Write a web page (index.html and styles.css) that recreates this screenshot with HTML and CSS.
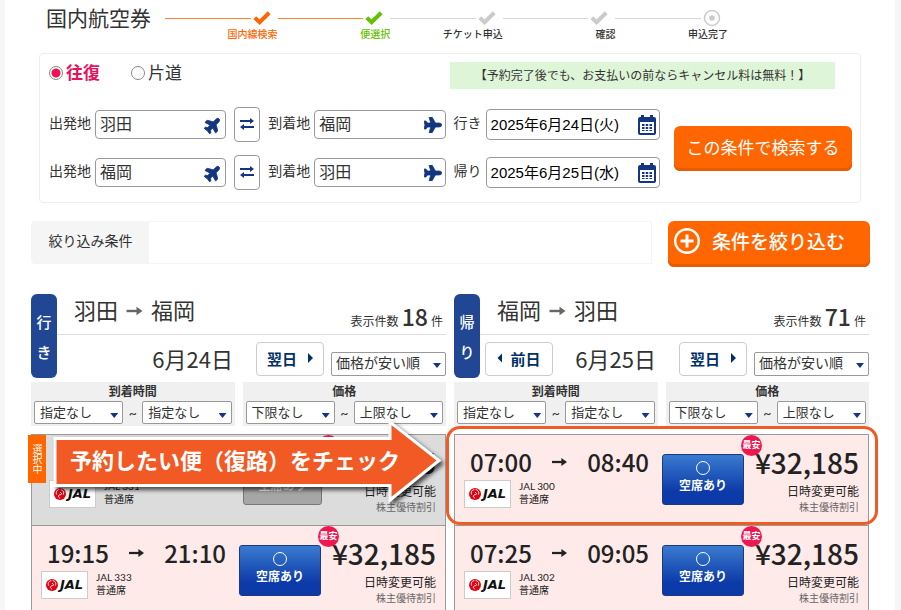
FILE: index.html
```html
<!DOCTYPE html>
<html lang="ja">
<head>
<meta charset="utf-8">
<title>国内航空券</title>
<link rel="stylesheet" href="styles.css">
</head>
<body>
<svg class="defs" aria-hidden="true">
  <symbol id="check" viewBox="0 0 18 14"><path d="M1.800 6.800 6.600 11.200 16.200 1.800" fill="none" stroke="currentColor" stroke-width="4"/></symbol>
  <symbol id="plane" viewBox="0 0 576 512"><path fill="currentColor" stroke="currentColor" stroke-width="24" d="M480 192H365.71L260.61 8.06A16.014 16.014 0 0 0 246.71 0h-65.5c-10.63 0-18.3 10.17-15.38 20.39L214.86 192H112l-43.2-57.6c-3.02-4.03-7.77-6.4-12.8-6.4H16.01C5.6 128-2.04 137.78.49 147.88L32 256 .49 364.12C-2.04 374.22 5.6 384 16.01 384H56c5.04 0 9.78-2.37 12.8-6.4L112 320h102.86l-49.03 171.6c-2.92 10.22 4.75 20.4 15.38 20.4h65.5c5.74 0 11.04-3.08 13.89-8.06L365.71 320H480c35.35 0 96-28.65 96-64s-60.65-64-96-64z"/></symbol>
  <symbol id="swap" viewBox="0 0 14 12"><path d="M0 3h11M3 9h11" stroke="currentColor" stroke-width="2"/><path d="M10 0 14 3l-4 3zM4 6 0 9l4 3z" fill="currentColor"/></symbol>
  <symbol id="calendar" viewBox="0 0 18 20"><path fill="currentColor" fill-rule="evenodd" d="M2 2h1V0h3V2h6V0h3V2h1q2 0 2 2v14q0 2-2 2H2q-2 0-2-2V4q0-2 2-2zM2 7v11h14V7z"/><path fill="currentColor" d="M4 9h2.500v2H4zM7.700 9h2.500v2H7.700zM11.500 9H14v2h-2.500zM4 12h2.500v2H4zM7.700 12h2.500v2H7.700zM11.500 12H14v2h-2.500zM4 15h2.500v1H4zM7.700 15h2.500v1H7.700zM11.500 15H14v1h-2.500z"/></symbol>
  <symbol id="arrow" viewBox="0 0 16 10"><path d="M0 5h11" stroke="currentColor" stroke-width="2.400"/><path d="M10 .8l6 4.200-6 4.200z" fill="currentColor"/></symbol>
  <symbol id="crane" viewBox="0 0 12 12"><circle cx="6" cy="6" r="6" fill="#e60012"/><path d="M2.600 6.500C1.500 3.500 3.500 1.800 5.300 1.600M9.400 6.500C10.500 3.500 8.500 1.800 6.700 1.600M6 10C3.300 9 4.300 6.800 6.200 6.700S8 4.800 6 4.300" fill="none" stroke="#fff" stroke-width="1"/></symbol>
</svg>
<main class="page">
  <header class="top">
    <h1>国内航空券</h1>
    <ol class="steps">
      <li class="step done"><span class="track"><svg class="tick"><use href="#check"/></svg></span><span class="step-name">国内線検索</span></li>
      <li class="step current"><span class="track"><svg class="tick"><use href="#check"/></svg></span><span class="step-name">便選択</span></li>
      <li class="step"><span class="track"><svg class="tick"><use href="#check"/></svg></span><span class="step-name">チケット申込</span></li>
      <li class="step"><span class="track"><svg class="tick"><use href="#check"/></svg></span><span class="step-name">確認</span></li>
      <li class="step"><span class="track"><svg class="tick" viewBox="0 0 18 18"><circle cx="9" cy="9" r="7.500" fill="none" stroke="currentColor" stroke-width="1.500"/><circle cx="9" cy="9" r="2.800" fill="currentColor"/></svg></span><span class="step-name">申込完了</span></li>
    </ol>
  </header>

  <form class="search">
    <div class="search-top">
      <label class="trip"><input type="radio" name="trip" checked><span>往復</span></label>
      <label class="trip"><input type="radio" name="trip"><span>片道</span></label>
      <p class="notice">【予約完了後でも、お支払いの前ならキャンセル料は無料！】</p>
    </div>
    <div class="search-body">
      <div class="legs">
        <div class="leg">
          <label for="from1">出発地</label>
          <span class="field"><input id="from1" type="text" value="羽田"><svg class="plane takeoff"><use href="#plane"/></svg></span>
          <button type="button" class="swap" aria-label="入れ替え"><svg><use href="#swap"/></svg></button>
          <label for="to1">到着地</label>
          <span class="field"><input id="to1" type="text" value="福岡"><svg class="plane"><use href="#plane"/></svg></span>
          <label for="date1" class="date-label">行き</label>
          <span class="field date"><input id="date1" type="text" value="2025年6月24日(火)"><svg class="calendar"><use href="#calendar"/></svg></span>
        </div>
        <div class="leg">
          <label for="from2">出発地</label>
          <span class="field"><input id="from2" type="text" value="福岡"><svg class="plane takeoff"><use href="#plane"/></svg></span>
          <button type="button" class="swap" aria-label="入れ替え"><svg><use href="#swap"/></svg></button>
          <label for="to2">到着地</label>
          <span class="field"><input id="to2" type="text" value="羽田"><svg class="plane"><use href="#plane"/></svg></span>
          <label for="date2" class="date-label">帰り</label>
          <span class="field date"><input id="date2" type="text" value="2025年6月25日(水)"><svg class="calendar"><use href="#calendar"/></svg></span>
        </div>
      </div>
      <button type="button" class="primary submit">この条件で検索する</button>
    </div>
  </form>

  <section class="narrow">
    <div class="conditions"><h2>絞り込み条件</h2></div>
    <button type="button" class="primary refine"><svg viewBox="0 0 26 26"><circle cx="13" cy="13" r="11.800" fill="none" stroke="#fff" stroke-width="2.400"/><path d="M13 6.500v13M6.500 13h13" stroke="#fff" stroke-width="3"/></svg><span>条件を絞り込む</span></button>
  </section>

  <div class="panels">
    <section class="panel">
      <div class="panel-head">
        <div class="tab"><span>行</span><span>き</span></div>
        <div class="panel-info">
          <div class="route-row"><h2>羽田<svg class="route-arrow"><use href="#arrow"/></svg>福岡</h2><p class="count">表示件数 <strong>18</strong> 件</p></div>
          <div class="day-row">
            <span class="day">6月24日</span>
            <button type="button" class="day-button">翌日<i class="next"></i></button>
            <span class="select sort"><select aria-label="並び順"><option>価格が安い順</option></select></span>
          </div>
        </div>
      </div>
      <div class="ranges">
        <fieldset><legend>到着時間</legend><div class="range"><span class="select"><select aria-label="到着時間から"><option>指定なし</option></select></span><span class="tilde">~</span><span class="select"><select aria-label="到着時間まで"><option>指定なし</option></select></span></div></fieldset>
        <fieldset><legend>価格</legend><div class="range"><span class="select"><select aria-label="価格下限"><option>下限なし</option></select></span><span class="tilde">~</span><span class="select"><select aria-label="価格上限"><option>上限なし</option></select></span></div></fieldset>
      </div>
      <ul class="flights">
        <li class="flight selected">
          <span class="selected-tag">選択中</span>
          <div class="schedule">
            <div class="times"></div>
            <div class="carrier"><span class="logo"><svg><use href="#crane"/></svg><b>JAL</b></span><p>JAL 331<br>普通席</p></div>
          </div>
          <button type="button" class="seat" disabled><i></i>空席あり</button>
          <span class="cheapest">最安</span>
          <div class="fare"><strong>¥32,185</strong><span>日時変更可能</span><small>株主優待割引</small></div>
          <div class="callout">
            <svg viewBox="0 0 396 92"><path d="M3 20.500H338V4L387 42.500 338 82V67.500H3z"/></svg>
            <p>予約したい便（復路）をチェック</p>
          </div>
        </li>
        <li class="flight">
          <div class="schedule">
            <div class="times"><time>19:15</time><svg><use href="#arrow"/></svg><time>21:10</time></div>
            <div class="carrier"><span class="logo"><svg><use href="#crane"/></svg><b>JAL</b></span><p>JAL 333<br>普通席</p></div>
          </div>
          <button type="button" class="seat"><i></i>空席あり</button>
          <span class="cheapest">最安</span>
          <div class="fare"><strong>¥32,185</strong><span>日時変更可能</span><small>株主優待割引</small></div>
        </li>
      </ul>
    </section>

    <section class="panel">
      <div class="panel-head">
        <div class="tab"><span>帰</span><span>り</span></div>
        <div class="panel-info">
          <div class="route-row"><h2>福岡<svg class="route-arrow"><use href="#arrow"/></svg>羽田</h2><p class="count">表示件数 <strong>71</strong> 件</p></div>
          <div class="day-row">
            <button type="button" class="day-button previous"><i class="prev"></i>前日</button>
            <span class="day">6月25日</span>
            <button type="button" class="day-button">翌日<i class="next"></i></button>
            <span class="select sort"><select aria-label="並び順"><option>価格が安い順</option></select></span>
          </div>
        </div>
      </div>
      <div class="ranges">
        <fieldset><legend>到着時間</legend><div class="range"><span class="select"><select aria-label="到着時間から"><option>指定なし</option></select></span><span class="tilde">~</span><span class="select"><select aria-label="到着時間まで"><option>指定なし</option></select></span></div></fieldset>
        <fieldset><legend>価格</legend><div class="range"><span class="select"><select aria-label="価格下限"><option>下限なし</option></select></span><span class="tilde">~</span><span class="select"><select aria-label="価格上限"><option>上限なし</option></select></span></div></fieldset>
      </div>
      <ul class="flights">
        <li class="flight focus">
          <div class="schedule">
            <div class="times"><time>07:00</time><svg><use href="#arrow"/></svg><time>08:40</time></div>
            <div class="carrier"><span class="logo"><svg><use href="#crane"/></svg><b>JAL</b></span><p>JAL 300<br>普通席</p></div>
          </div>
          <button type="button" class="seat"><i></i>空席あり</button>
          <span class="cheapest">最安</span>
          <div class="fare"><strong>¥32,185</strong><span>日時変更可能</span><small>株主優待割引</small></div>
        </li>
        <li class="flight">
          <div class="schedule">
            <div class="times"><time>07:25</time><svg><use href="#arrow"/></svg><time>09:05</time></div>
            <div class="carrier"><span class="logo"><svg><use href="#crane"/></svg><b>JAL</b></span><p>JAL 302<br>普通席</p></div>
          </div>
          <button type="button" class="seat"><i></i>空席あり</button>
          <span class="cheapest">最安</span>
          <div class="fare"><strong>¥32,185</strong><span>日時変更可能</span><small>株主優待割引</small></div>
        </li>
      </ul>
    </section>
  </div>
</main>
</body>
</html>
```
FILE: styles.css
```css
* { box-sizing: border-box; }
body, h1, h2, p, ol, ul, fieldset { margin: 0; padding: 0; }
ol, ul { list-style: none; }
body {
  height: 100vh;
  overflow: hidden;
  background: #f6f6f6;
  color: #333;
  font-family: Lato, "Noto Sans CJK JP", sans-serif;
  font-size: 14px;
}
button, input, select { font: inherit; color: inherit; margin: 0; }
button { cursor: pointer; padding: 0; }
svg { display: block; flex: none; }
.defs { display: none; }
.page { min-height: 100vh; margin: 0 6px 0 5px; background: #fff; }

/* Header and progress */
.top { display: flex; height: 53px; padding-left: 41px; }
h1 { font-size: 21px; font-weight: 400; line-height: 36px; width: 119px; }
.steps { display: grid; grid-template-columns: repeat(5, 1fr); flex: 0 1 563px; padding-top: 9px; align-self: flex-start; }
.step { --line: #d8d8d8; }
.step.done, .step.current { --line: #ff8133; }
.track { display: flex; align-items: center; gap: 2px; height: 18px; padding-right: 7px; color: #ccc; }
.track::before { content: ""; flex: 1; height: 1px; background: var(--line); }
.tick { width: 18px; height: 18px; }
.step-name { display: block; text-align: right; font-size: 10px; line-height: 14px; font-weight: 500; }
.done, .done .track { color: #ff6600; }
.current, .current .track { color: #66bf00; }

/* Search form */
.search { margin: 0 34px; padding: 8px 8px 6px 9px; border: 1px solid #eee; border-radius: 4px; }
.search-top { display: flex; align-items: flex-start; height: 27px; }
.trip { display: flex; align-items: center; gap: 3px; width: 82px; height: 21px; font-size: 17px; line-height: 21px; }
.trip input { appearance: none; width: 14px; height: 14px; border: 1px solid #888; border-radius: 50%; background: #fff; }
.trip input:checked { background: radial-gradient(circle, #ee1155 4px, #fff 5px); }
.trip input:checked + span { color: #e8115b; font-weight: 700; }
.notice { margin-left: auto; margin-right: 17px; width: 385px; background: #dff5d8; text-align: center; font-size: 12px; line-height: 27px; white-space: nowrap; }
.search-body { display: flex; align-items: center; gap: 14px; margin-top: 11px; }
.legs { flex: 1; }
.leg { display: flex; align-items: center; height: 48px; }
.leg label { margin-right: 4px; white-space: nowrap; line-height: 20px; padding-bottom: 2px; }
.field { position: relative; flex: 131 1 0; min-width: 0; }
.field input { display: block; width: 100%; height: 29px; padding: 0 4px 2px; border: 1px solid #999; border-radius: 4px; background: #fff; font-size: 16px; outline: 0; }
.field svg { position: absolute; right: 4px; top: 7px; width: 18px; height: 16px; color: #14357f; pointer-events: none; }
.field .takeoff { transform: rotate(-45deg); }
.field.date { flex-grow: 174; }
.date input { height: 31px; color: #000; font-family: "Liberation Sans", "Noto Sans CJK JP", sans-serif; font-size: 15px; }
.field .calendar { height: 20px; width: 18px; top: 6px; }
.date-label { margin-left: 8px; }
.swap { display: grid; place-items: center; width: 26px; height: 35px; margin: 0 8px; border: 1px solid #999; border-radius: 4px; background: #fff; color: #14357f; }
.swap svg { width: 14px; height: 12px; }
.primary { border: 0; border-radius: 6px; background: #ff6600; box-shadow: inset 0 -3px #e65c00; color: #fff; font-weight: 500; }
.submit { width: 178px; height: 45px; padding-bottom: 3px; font-size: 17px; font-weight: 400; }

/* Filter bar */
.narrow { display: flex; gap: 16px; margin: 18px 25px 0 26px; }
.conditions { flex: 1; height: 43px; border: 1px solid #f5f5f5; border-radius: 4px 0 0 4px; }
.conditions h2 { width: 117px; height: 100%; background: #f5f5f5; text-align: center; font-size: 14px; font-weight: 400; line-height: 37px; }
.refine { display: flex; align-items: center; gap: 12px; width: 202px; height: 46px; padding: 0 6px 7px; font-size: 19px; }
.refine svg { width: 26px; height: 26px; }

/* Result panels */
.panels { display: grid; grid-template-columns: 1fr 1fr; gap: 8px; margin: 27px 26px 0; }
.panel-head { display: flex; height: 84px; }
.tab { display: flex; flex-direction: column; align-items: center; gap: 6px; width: 26px; padding-top: 16px; border-radius: 6px; background: #214794; color: #fff; font-size: 15px; line-height: 24px; font-weight: 500; }
.panel-info { flex: 1; }
.route-row { display: flex; justify-content: space-between; height: 41px; padding: 0 3px 0 17px; border-bottom: 1px solid #ddd; }
.route-row h2 { display: flex; align-items: center; gap: 8px; height: 33px; font-size: 22px; line-height: 33px; font-weight: 400; }
.route-arrow { width: 17px; height: 10px; color: #666; }
.count { align-self: flex-end; font-size: 12px; line-height: 30px; height: 33px; white-space: nowrap; }
.count strong, .times, .fare strong { font-family: "Noto Sans CJK JP", sans-serif; font-weight: 500; }
.count strong { font-size: 23px; line-height: 30px; }
.day-row { display: flex; justify-content: flex-end; align-items: center; height: 43px; padding: 7px 0 2px; }
.day { margin-right: 23px; font-size: 22px; line-height: 32px; height: 34px; font-family: "Noto Sans CJK JP", sans-serif; }
.day-button { display: flex; align-items: center; justify-content: center; gap: 11px; width: 68px; height: 34px; padding-bottom: 2px; border: 1px solid #ccc; border-radius: 4px; background: #fff; color: #003066; font-size: 15px; font-weight: 700; }
.previous { margin-left: 5px; margin-right: auto; gap: 8px; }
.day-button i { width: 5px; height: 10px; background: currentColor; clip-path: polygon(0 0, 100% 50%, 0 100%); }
.day-button .prev { clip-path: polygon(100% 0, 0 50%, 100% 100%); }
.select { position: relative; display: block; }
.select::after { content: ""; position: absolute; right: 5px; bottom: 8px; width: 8px; height: 5px; background: #14357f; clip-path: polygon(0 0, 100% 0, 50% 100%); pointer-events: none; }
.select select { appearance: none; display: block; width: 100%; height: 23px; padding: 0 5px 2px; border: 1px solid #999; border-radius: 2px; background: #fff; font-size: 13px; line-height: 20px; }
.sort { align-self: flex-end; width: 115px; margin-left: 7px; }
.sort select { height: 24px; padding: 0 4px 2px; font-size: 14px; }
.ranges { display: grid; grid-template-columns: 1fr 1fr; gap: 8px; margin-top: 4px; }
.ranges fieldset { min-width: 0; height: 44px; padding: 0 3px; border: 0; background: #f0f0f0; }
.ranges legend { float: left; width: 100%; padding: 0; text-align: center; font-size: 12px; line-height: 19px; font-weight: 700; }
.range { display: flex; align-items: center; clear: both; }
.range .select { flex: 1; }
.range .select::after { bottom: 6px; }
.tilde { width: 19px; text-align: center; line-height: 20px; }

/* Flight rows */
.flights { margin-top: 8px; border: 1px solid #999; }
.flight { position: relative; display: flex; height: 91px; padding: 0 9px; border-bottom: 1px solid #999; background: #ffeaea; color: #222; }
.schedule { width: 198px; }
.times { display: flex; align-items: center; justify-content: space-between; width: 179px; height: 28px; margin: 13px 0 4px 6px; font-size: 24px; line-height: 28px; }
.times svg { width: 15px; height: 10px; }
.carrier { display: flex; gap: 8px; font-size: 10px; line-height: 13px; }
.logo { display: flex; align-items: center; justify-content: center; gap: 2px; width: 47px; height: 28px; border: 1px solid #ccc; background: #fff; }
.logo svg { width: 12px; height: 12px; }
.logo b { font: italic 700 13px/14px "DejaVu Sans", sans-serif; color: #111; }
.seat { display: flex; flex-direction: column; align-items: center; width: 82px; height: 51px; margin-top: 19px; padding-top: 6px; border: 1px solid #1a3a80; border-radius: 3px; background: linear-gradient(#3a7bd0, #0c3aa8 75%); color: #fff; font-size: 12px; line-height: 18px; font-weight: 700; }
.seat i { width: 14px; height: 14px; margin-bottom: 2px; border: 1px solid #fff; border-radius: 50%; flex: none; }
.cheapest { position: absolute; left: 286px; top: 0; width: 21px; height: 21px; border-radius: 50%; background: #ee1850; color: #fff; text-align: center; font-size: 9px; line-height: 20px; font-weight: 700; white-space: nowrap; }
.fare { position: relative; flex: 1; display: flex; flex-direction: column; align-items: flex-end; padding-top: 9px; white-space: nowrap; }
.fare strong { font-size: 28px; line-height: 36px; margin-bottom: 4px; }
.fare span { font-size: 12px; line-height: 16px; }
.fare small { font-size: 10px; line-height: 15px; color: #666; }
.selected { background: #dcdcdc; padding-left: 17px; }
.selected .schedule { width: 194px; }
.selected .seat { width: 79px; border-color: #777; background: #a6a6a6; color: #fff; }
.selected-tag { position: absolute; left: -4px; top: 0; width: 18px; height: 48px; background: #ff6600; color: #fff; font-size: 10px; line-height: 18px; writing-mode: vertical-rl; text-align: center; }
.callout { position: absolute; left: 20px; top: -17px; width: 396px; height: 92px; z-index: 2; }
.callout svg { position: absolute; inset: 0; width: 100%; height: 100%; overflow: visible; filter: drop-shadow(3px 3px 2px #000a); }
.callout path { fill: #f15a24; stroke: #fff; stroke-width: 3; }
.callout p { position: relative; padding-left: 18px; color: #fff; font-size: 22px; line-height: 86px; font-weight: 700; white-space: nowrap; }
.focus::after { content: ""; position: absolute; inset: -9px -10px 0 -9px; border: 3px solid #f15a24; border-radius: 14px; z-index: 1; pointer-events: none; }
```
